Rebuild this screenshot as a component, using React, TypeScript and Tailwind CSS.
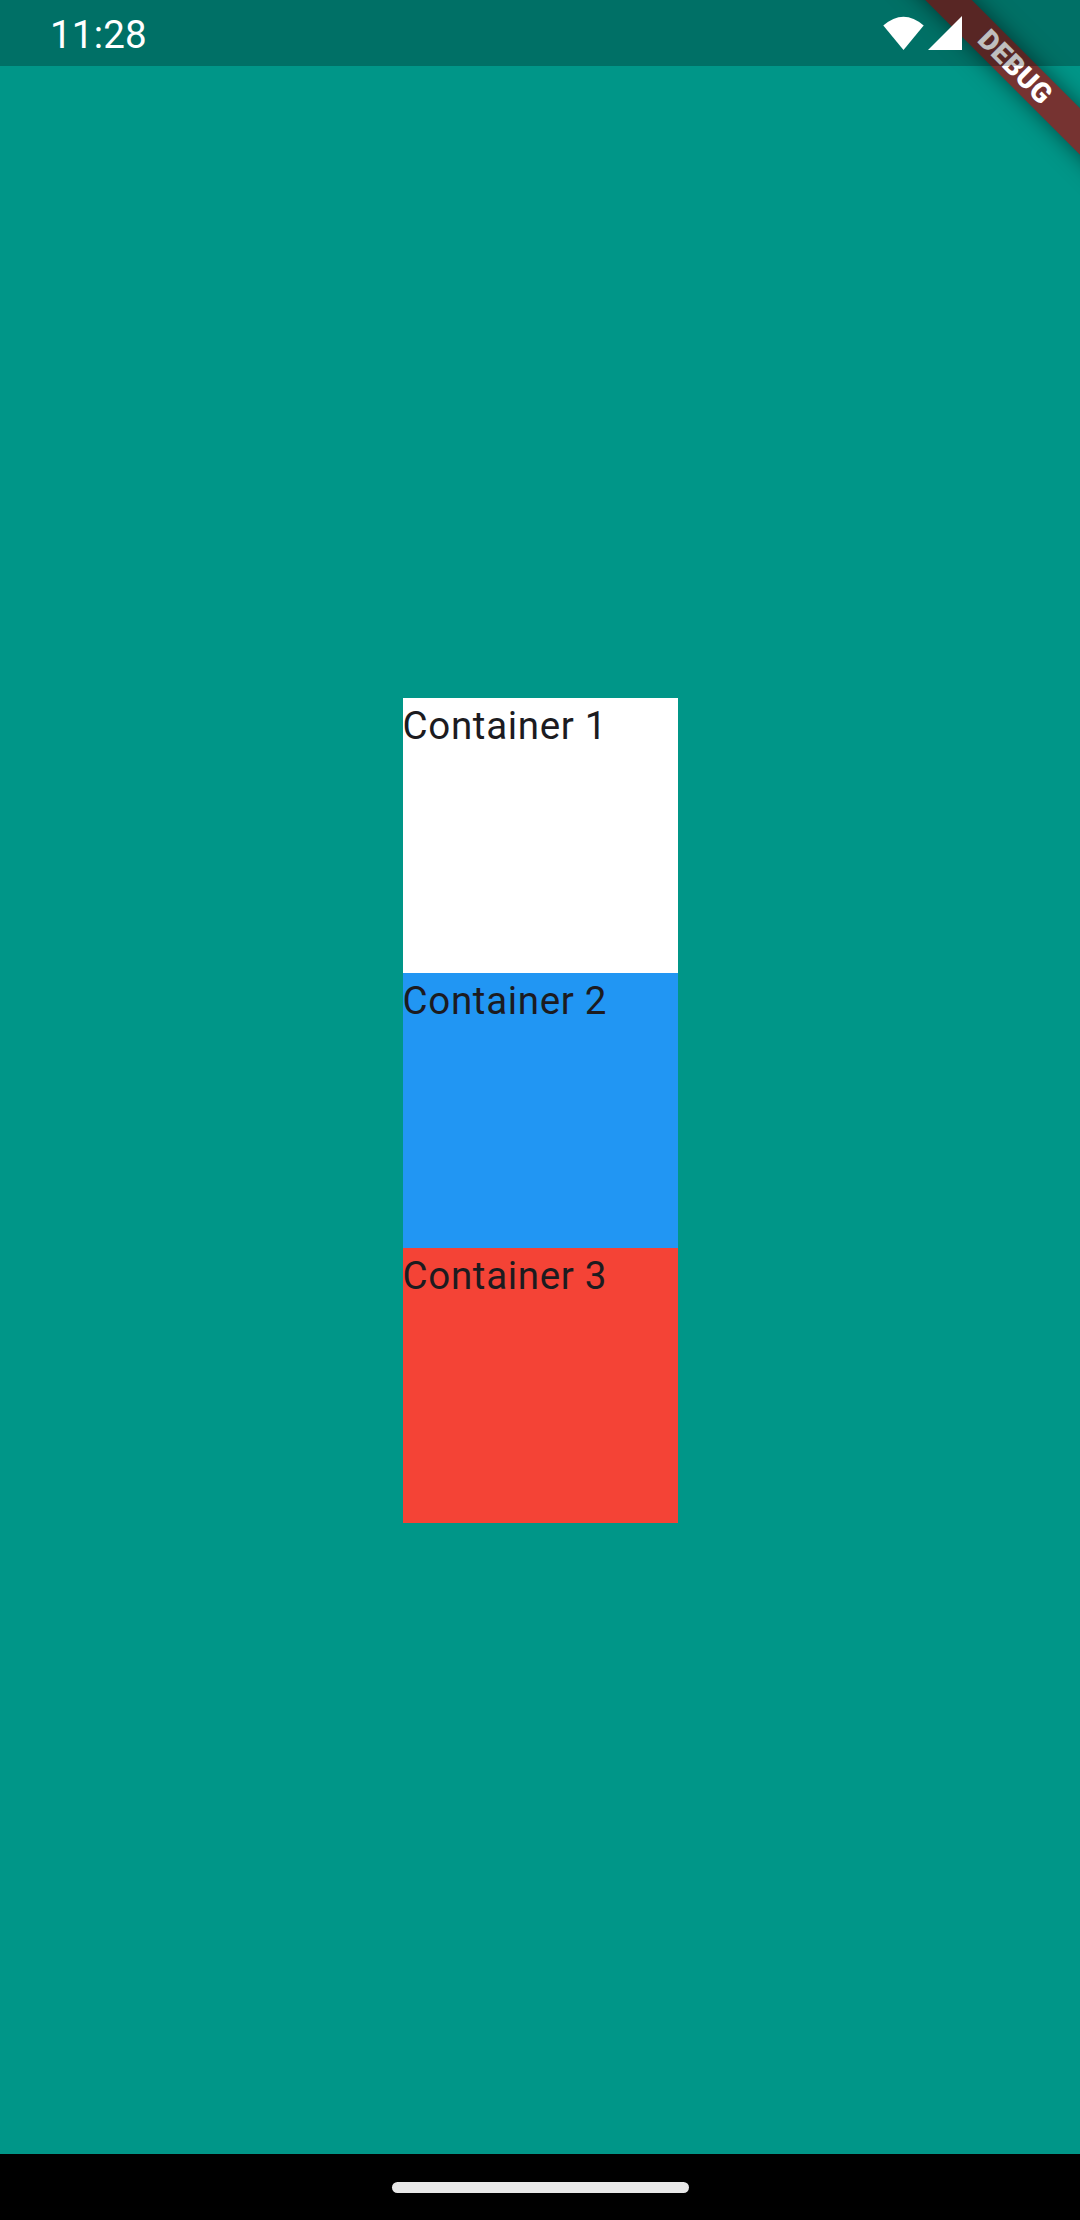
export default function App() {
  return (
    <div className="relative flex h-[2220px] w-[1080px] flex-col overflow-hidden bg-[#009688] font-['Roboto',sans-serif]">
      {/* Debug ribbon, sits under the translucent status bar */}
      <div className="absolute left-[814.25px] top-[49.25px] flex h-[33px] w-[400px] rotate-45 items-center justify-center bg-[#763331] pl-[4px] text-[28px] font-black leading-none tracking-[0.4px] text-white shadow-[0_0_22px_rgba(0,0,0,0.5)]">
        DEBUG
      </div>

      {/* Status bar */}
      <div className="relative z-10 flex h-[66px] shrink-0 items-center justify-between bg-black/25 pl-[50px] pr-[118px] text-white">
        <span className="pt-[4px] text-[38.5px] leading-none tracking-[0.2px]">11:28</span>
        <div className="flex items-center gap-[4px]">
          <svg width="41" height="34" viewBox="0 0 41 34" fill="white">
            <path d="M0.3 9.6 Q20.5 -8 40.7 9.6 L20.5 34 Z" />
          </svg>
          <svg width="34" height="34" viewBox="0 0 34 34" fill="white">
            <path d="M34 0 V34 H0 Z" />
          </svg>
        </div>
      </div>

      {/* Body */}
      <main className="flex flex-1 flex-col items-center justify-center">
        <Box label="Container 1" className="bg-white" />
        <Box label="Container 2" className="bg-[#2196f3]" />
        <Box label="Container 3" className="bg-[#f44336]" />
      </main>

      {/* Navigation bar */}
      <div className="flex h-[66px] shrink-0 items-center justify-center bg-black">
        <div className="h-[11px] w-[297px] rounded-full bg-[#e8e8e8]" />
      </div>
    </div>
  );
}

function Box({ label, className }: { label: string; className: string }) {
  return (
    <div className={`h-[275px] w-[275px] text-[38.5px] leading-[56px] tracking-[0.69px] text-[#1c1b1f] ${className}`}>
      {label}
    </div>
  );
}
